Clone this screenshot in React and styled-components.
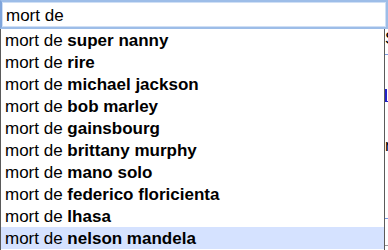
import React from "react";
import styled, { createGlobalStyle } from "styled-components";

const suggestions = [
  "super nanny",
  "rire",
  "michael jackson",
  "bob marley",
  "gainsbourg",
  "brittany murphy",
  "mano solo",
  "federico floricienta",
  "lhasa",
  "nelson mandela",
];

const GlobalStyle = createGlobalStyle`
  html, body {
    margin: 0;
    padding: 0;
    background: #fff;
    overflow: hidden;
  }
  body {
    font-family: "Liberation Sans", Arial, sans-serif;
    color: #000;
  }
`;

const Page = styled.div`
  position: relative;
  width: 388px;
  height: 250px;
  overflow: hidden;
`;

const SearchBox = styled.div`
  box-sizing: border-box;
  width: 388px;
  height: 29px;
  border: 2px solid #9dbde8;
  box-shadow: inset 0 0 0 1px #cfdff5;
  border-left-color: #7fa5dc;
  padding: 1px 0 0 4px;
  font-size: 17px;
  line-height: 26px;
  background: #fff;
  overflow: hidden;
`;

/* page content that peeks out to the right of the suggestion list */
const Behind = styled.div`
  padding-left: 385px;
  display: flex;
  flex-direction: column;
  font-size: 17px;
`;

const BehindText = styled.div`
  margin-top: ${(p) => p.$top}px;
  line-height: 14px;
  height: 14px;
  white-space: nowrap;
`;

const BehindLine = styled.div`
  margin-top: ${(p) => p.$top}px;
  height: 1px;
  background: ${(p) => p.$color};
`;

const BehindLink = styled.div`
  margin-top: ${(p) => p.$top}px;
  width: 3px;
  height: 13px;
  border-left: 2px solid #2323c8;
  border-bottom: 1px solid #2323c8;
  box-sizing: border-box;
`;

const Dropdown = styled.ul`
  position: absolute;
  top: 29px;
  left: 0;
  width: 385px;
  box-sizing: border-box;
  margin: 0;
  padding: 0;
  list-style: none;
  background: #fff;
  border-left: 1px solid #5a5a5a;
  border-right: 1px solid #5a5a5a;
  height: 230px;
`;

const Row = styled.li`
  height: 22px;
  box-sizing: border-box;
  padding: 2px 0 0 4px;
  font-size: 17px;
  line-height: 20px;
  white-space: nowrap;
  background: ${(p) => (p.$active ? "#d5e2ff" : "transparent")};

  b {
    font-weight: bold;
  }
`;

export default function App() {
  return (
    <Page>
      <GlobalStyle />
      <SearchBox>mort de</SearchBox>
      <Behind>
        <BehindText $top={3}>S</BehindText>
        <BehindLine $top={8} $color="#7b9be0" />
        <BehindLink $top={34} />
        <BehindText $top={37}>r</BehindText>
        <BehindLine $top={65} $color="#7b9be0" />
        <BehindLine $top={26} $color="#9a9a9a" />
      </Behind>
      <Dropdown>
        {suggestions.map((s, i) => (
          <Row key={s} $active={i === suggestions.length - 1}>
            mort de <b>{s}</b>
          </Row>
        ))}
      </Dropdown>
    </Page>
  );
}
